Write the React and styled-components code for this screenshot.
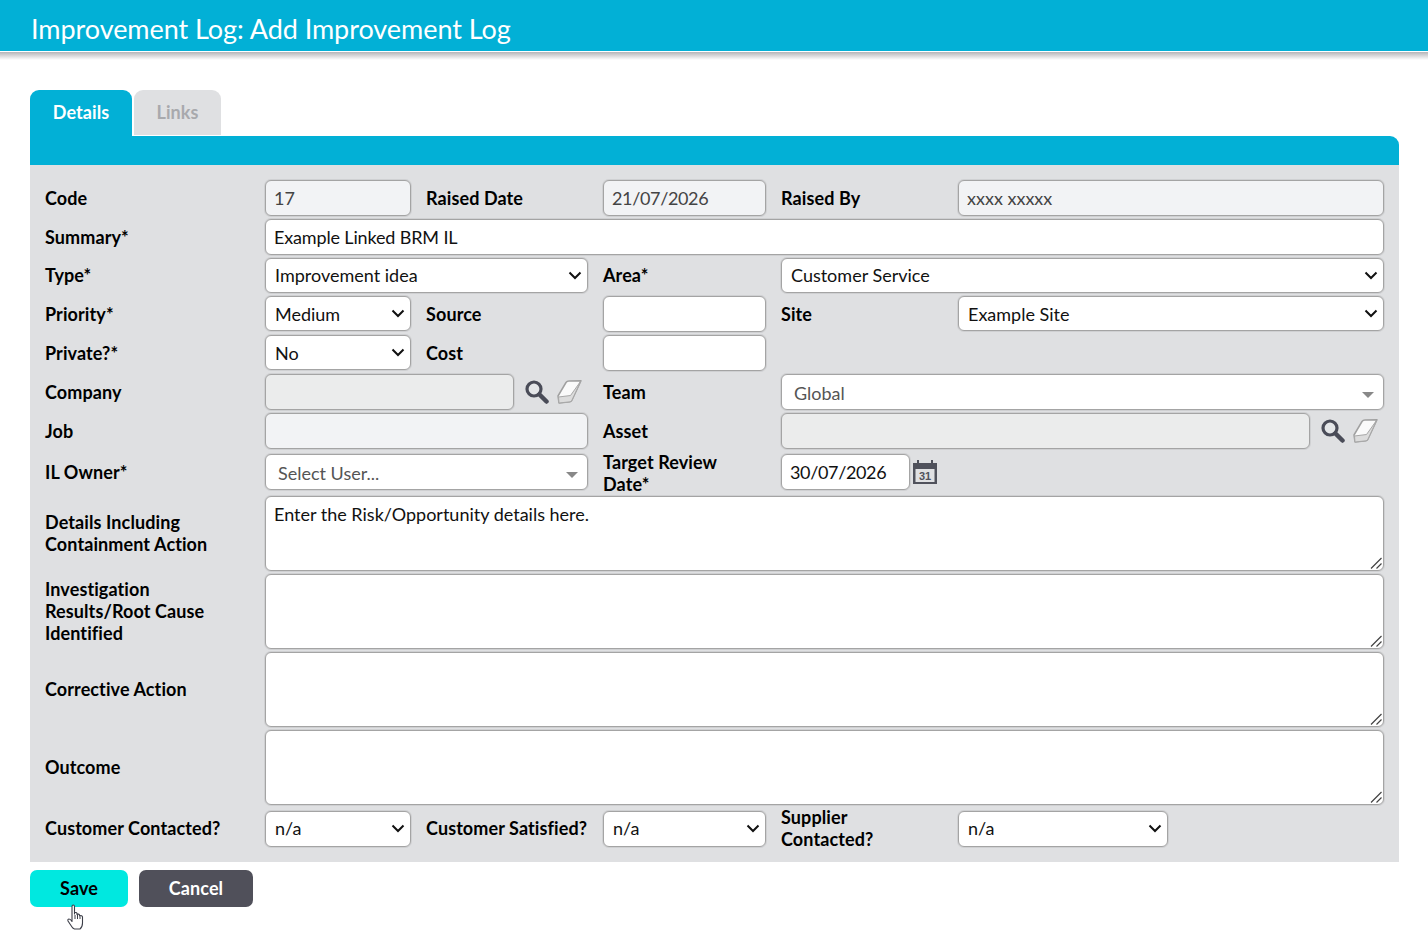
import React from 'react';
import styled, { createGlobalStyle, css } from 'styled-components';

const Global = createGlobalStyle`
	html, body {
		margin: 0;
		background: #fff;
		font-family: Lato, "Liberation Sans", sans-serif;
	}
`

const chevron = "data:image/svg+xml,%3Csvg xmlns='http://www.w3.org/2000/svg' width='14' height='9' viewBox='0 0 14 9'%3E%3Cpath d='M1.500 1.500 L7 7 L12.500 1.500' fill='none' stroke='%23111' stroke-width='2'/%3E%3C/svg%3E"
const grip = "data:image/svg+xml,%3Csvg xmlns='http://www.w3.org/2000/svg' width='15' height='15' viewBox='0 0 15 15'%3E%3Cpath d='M3 13.500 L13.500 3 M8.500 13.500 L13.500 8.500' fill='none' stroke='%23444' stroke-width='1.200'/%3E%3C/svg%3E"

const SearchIcon = () => (
	<svg width="24" height="24" viewBox="0 0 24 24">
		<circle cx="9" cy="9" r="7" fill="#e4e6e8" stroke="#4a4c58" strokeWidth="3.200" />
		<path d="M14.500 14.500 L21.500 21.500" stroke="#4a4c58" strokeWidth="4.500" strokeLinecap="round" />
	</svg>
)

const EraserIcon = () => (
	<svg width="25" height="24" viewBox="0 0 25 24">
		<path d="M1 16 L9 2.500 Q10 1 12 1 L24 .8 L15 20 Q14.500 21.500 13 21.800 L2 23 Z" fill="#fafafa" stroke="#a0a0a0" strokeWidth="1.500" strokeLinejoin="round" />
		<path d="M1.500 17 L13.500 15.500 L23.500 1.500 L15 20 Q14.500 21.500 13 21.800 L2 23 Z" fill="#dcdcdc" stroke="#a8a8a8" strokeWidth="1" strokeLinejoin="round" />
	</svg>
)

const CalendarIcon = () => (
	<svg width="24" height="24" viewBox="0 0 24 24">
		<path d="M0 3 H24 V24 H0 Z" fill="#50525c" />
		<rect x="2.500" y="9" width="19" height="13" fill="#e0e1e3" />
		<rect x="4" y="0" width="2" height="5" fill="#50525c" />
		<rect x="18" y="0" width="2" height="5" fill="#50525c" />
		<text x="12" y="20" textAnchor="middle" fontFamily="Liberation Sans" fontWeight="700" fontSize="11" fill="#50525c">31</text>
	</svg>
)

const HandCursor = () => (
	<svg width="18" height="26" viewBox="0 0 18 26">
		<path
			d="M5 13 V2.500 Q5 1 6.200 1 Q7.500 1 7.500 2.500 V10 V8.800 Q9.500 8 10 9.500 V10.500 Q12 9.500 12.500 11 V12 Q15 11 15.500 13 V19 Q15.500 23 13 25 H7.500 Q6 24.500 5 23 L1 17 Q.5 15 2 15 Q3.500 15 5 17.500 Z"
			fill="#fff"
			stroke="#3c3e48"
			strokeWidth="1.100"
			strokeLinejoin="round"
		/>
		<path d="M8 11 V15 M10.500 11 V15 M13 12.500 V15" stroke="#3c3e48" strokeWidth="1" fill="none" />
	</svg>
)

const App = () => (
	<>
		<Global />
		<Header>
			<Title>Improvement Log: Add Improvement Log</Title>
		</Header>
		<Shadow />
		<Page>
			<Tabs>
				<Tab $active>Details</Tab>
				<Tab>Links</Tab>
			</Tabs>
			<TabBar />
			<Panel>
				<Label>Code</Label>
				<Input $readonly readOnly defaultValue="17" />
				<Label>Raised Date</Label>
				<DigitInput $readonly readOnly defaultValue="21/07/2026" />
				<Label>Raised By</Label>
				<Input $readonly readOnly defaultValue="xxxx xxxxx" />

				<Label>Summary*</Label>
				<Wide $cols={5}><Input $tight defaultValue="Example Linked BRM IL" /></Wide>

				<Label $up>Type*</Label>
				<Wide $cols={2}>
					<Select $h={35}><option>Improvement idea</option></Select>
				</Wide>
				<Label $up>Area*</Label>
				<Wide $cols={2}>
					<Select $h={35}><option>Customer Service</option></Select>
				</Wide>

				<Label>Priority*</Label>
				<Select $h={35} $lift><option>Medium</option></Select>
				<Label>Source</Label>
				<Input />
				<Label>Site</Label>
				<Select $h={35} $lift><option>Example Site</option></Select>

				<Label>Private?*</Label>
				<Select $h={35} $lift><option>No</option></Select>
				<Label>Cost</Label>
				<Input />
				<Spacer $cols={2} />

				<Label>Company</Label>
				<Wide $cols={2}>
					<LookupRow>
						<Input $disabled disabled />
						<SearchIcon />
						<EraserIcon />
					</LookupRow>
				</Wide>
				<Label>Team</Label>
				<Wide $cols={2}>
					<FakeSelect>Global<Caret /></FakeSelect>
				</Wide>

				<Label>Job</Label>
				<Wide $cols={2}><Input $readonly readOnly /></Wide>
				<Label>Asset</Label>
				<Wide $cols={2}>
					<LookupRow>
						<Input $disabled disabled />
						<SearchIcon />
						<EraserIcon />
					</LookupRow>
				</Wide>

				<Label $up>IL Owner*</Label>
				<Wide $cols={2} $top>
					<FakeSelect>Select User...<Caret /></FakeSelect>
				</Wide>
				<Label $wrap>Target Review Date*</Label>
				<Wide $cols={2} $top>
					<DateRow>
						<DigitInput defaultValue="30/07/2026" style={{ width: 129 }} />
						<CalendarIcon />
					</DateRow>
				</Wide>

				<Label $up>Details Including Containment Action</Label>
				<Wide $cols={5}><TextArea defaultValue="Enter the Risk/Opportunity details here." /></Wide>

				<Label $up>Investigation Results/Root Cause Identified</Label>
				<Wide $cols={5}><TextArea /></Wide>

				<Label $up>Corrective Action</Label>
				<Wide $cols={5}><TextArea /></Wide>

				<Label $up>Outcome</Label>
				<Wide $cols={5}><TextArea /></Wide>

				<Label $up>Customer Contacted?</Label>
				<Select><option>n/a</option></Select>
				<Label $up>Customer Satisfied?</Label>
				<Select><option>n/a</option></Select>
				<Label $wrap $up>Supplier Contacted?</Label>
				<Select $narrow><option>n/a</option></Select>
			</Panel>
			<Buttons>
				<Button $save>Save</Button>
				<Button>Cancel</Button>
				<Cursor><HandCursor /></Cursor>
			</Buttons>
		</Page>
	</>
)

const fieldBox = css`
	box-sizing: border-box;
	border: 1px solid #a4a4a4;
	border-radius: 6px;
	box-shadow: 0 0 0 1px rgba(150, 150, 155, 0.22);
	outline: none;
`

const Header = styled.header`
	height: 51px;
	box-sizing: border-box;
	background: #02b0d6;
	display: flex;
	align-items: center;
	padding: 5px 31px 0;
`
const Title = styled.h1`
	margin: 0;
	font-size: 27px;
	font-weight: 400;
	letter-spacing: -0.05px;
	color: #fff;
`
const Shadow = styled.div`
	height: 8px;
	margin-top: 1px;
	background: linear-gradient(#b4b5b8, #fff);
`
const Page = styled.main`
	padding: 30px 29px 34px 30px;
`
const Tabs = styled.div`
	display: flex;
	gap: 2px;
	align-items: flex-start;
`
const Tab = styled.div`
	width: ${p => p.$active ? '102px' : '87px'};
	height: ${p => p.$active ? '46px' : '45px'};
	padding-top: 11px;
	box-sizing: border-box;
	text-align: center;
	font-size: 18px;
	font-weight: 700;
	letter-spacing: 0.1px;
	border-radius: 9px 9px 0 0;
	background: ${p => p.$active ? '#02b0d6' : '#dfe0e2'};
	color: ${p => p.$active ? '#fff' : '#a8a9ad'};
`
const TabBar = styled.div`
	height: 29px;
	background: #02b0d6;
	border-radius: 0 9px 0 0;
`
const Panel = styled.div`
	background: #dfe0e2;
	padding: 15px 15px 13px;
	display: grid;
	grid-template-columns: 205px 146px 162px 163px 162px 426px;
	grid-template-rows: 36px 36px 35px 36px 36px 36px 36px 41px 75px 75px 75px 75px 41px;
	column-gap: 15px;
	row-gap: 3px;
	align-items: center;
`
const Label = styled.label`
	font-size: 18px;
	font-weight: 700;
	line-height: 22px;
	letter-spacing: 0.1px;
	color: #000;
	margin-bottom: ${p => p.$up ? '2px' : '0'};
	max-width: ${p => p.$wrap ? '150px' : 'none'};
`
const Wide = styled.div`
	grid-column: span ${p => p.$cols};
	align-self: stretch;
	display: flex;
	align-items: ${p => p.$top ? 'flex-start' : 'center'};
	padding-top: ${p => p.$top ? '2px' : '0'};
	min-width: 0;
`
const Spacer = styled.div`
	grid-column: span ${p => p.$cols};
`
const Input = styled.input`
	${fieldBox}
	width: 100%;
	height: 36px;
	min-width: 0;
	padding: 0 8px;
	font: 400 18px Lato, sans-serif;
	letter-spacing: ${p => p.$tight ? '-0.15px' : '0'};
	color: ${p => p.$readonly ? '#444' : '#111'};
	background: ${p => p.$disabled ? '#ebecec' : p.$readonly ? '#f2f3f5' : '#fff'};
`
const DigitInput = styled(Input)`
	letter-spacing: -0.35px;
`
const Select = styled.select`
	${fieldBox}
	appearance: none;
	width: ${p => p.$narrow ? '210px' : '100%'};
	height: ${p => p.$h || 36}px;
	margin-bottom: ${p => p.$lift ? '1px' : '0'};
	padding: 0 20px ${p => p.$lift ? '0' : '2px'} 9px;
	font: 400 18px Lato, sans-serif;
	color: #111;
	background: #fff url("${chevron}") no-repeat right 5px center;
`
const FakeSelect = styled.div`
	${fieldBox}
	width: 100%;
	height: 36px;
	position: relative;
	display: flex;
	align-items: center;
	padding: 1px 0 0 12px;
	font-size: 18px;
	color: #555;
	background: #fff;
`
const Caret = styled.span`
	position: absolute;
	right: 9px;
	top: 17px;
	border-style: solid;
	border-width: 6px 6px 0;
	border-color: #888 transparent transparent;
`
const LookupRow = styled.div`
	display: grid;
	grid-template-columns: 1fr 27px 25px;
	width: 100%;
	align-items: center;
	column-gap: 8px;
	padding-right: 6px;
	box-sizing: border-box;
	& > svg:nth-child(2) {
		margin-left: 3px;
	}
`
const DateRow = styled.div`
	display: flex;
	align-items: center;
	gap: 3px;
`
const TextArea = styled.textarea`
	${fieldBox}
	display: block;
	width: 100%;
	height: 75px;
	padding: 5px 8px;
	font: 400 18px/24px Lato, sans-serif;
	color: #111;
	background: #fff;
	resize: both;
	&::-webkit-resizer {
		background: url("${grip}") no-repeat right bottom;
	}
`
const Buttons = styled.div`
	position: relative;
	display: flex;
	gap: 11px;
	margin-top: 8px;
`
const Button = styled.button`
	width: ${p => p.$save ? '98px' : '114px'};
	height: 37px;
	padding: 0 0 2px;
	border: 0;
	border-radius: 7px;
	font: 700 18px Lato, sans-serif;
	letter-spacing: 0.1px;
	background: ${p => p.$save ? '#00e8e0' : '#50505a'};
	color: ${p => p.$save ? '#000' : '#fff'};
`
const Cursor = styled.span`
	position: absolute;
	left: 37px;
	top: 34px;
	display: block;
`

export default App
